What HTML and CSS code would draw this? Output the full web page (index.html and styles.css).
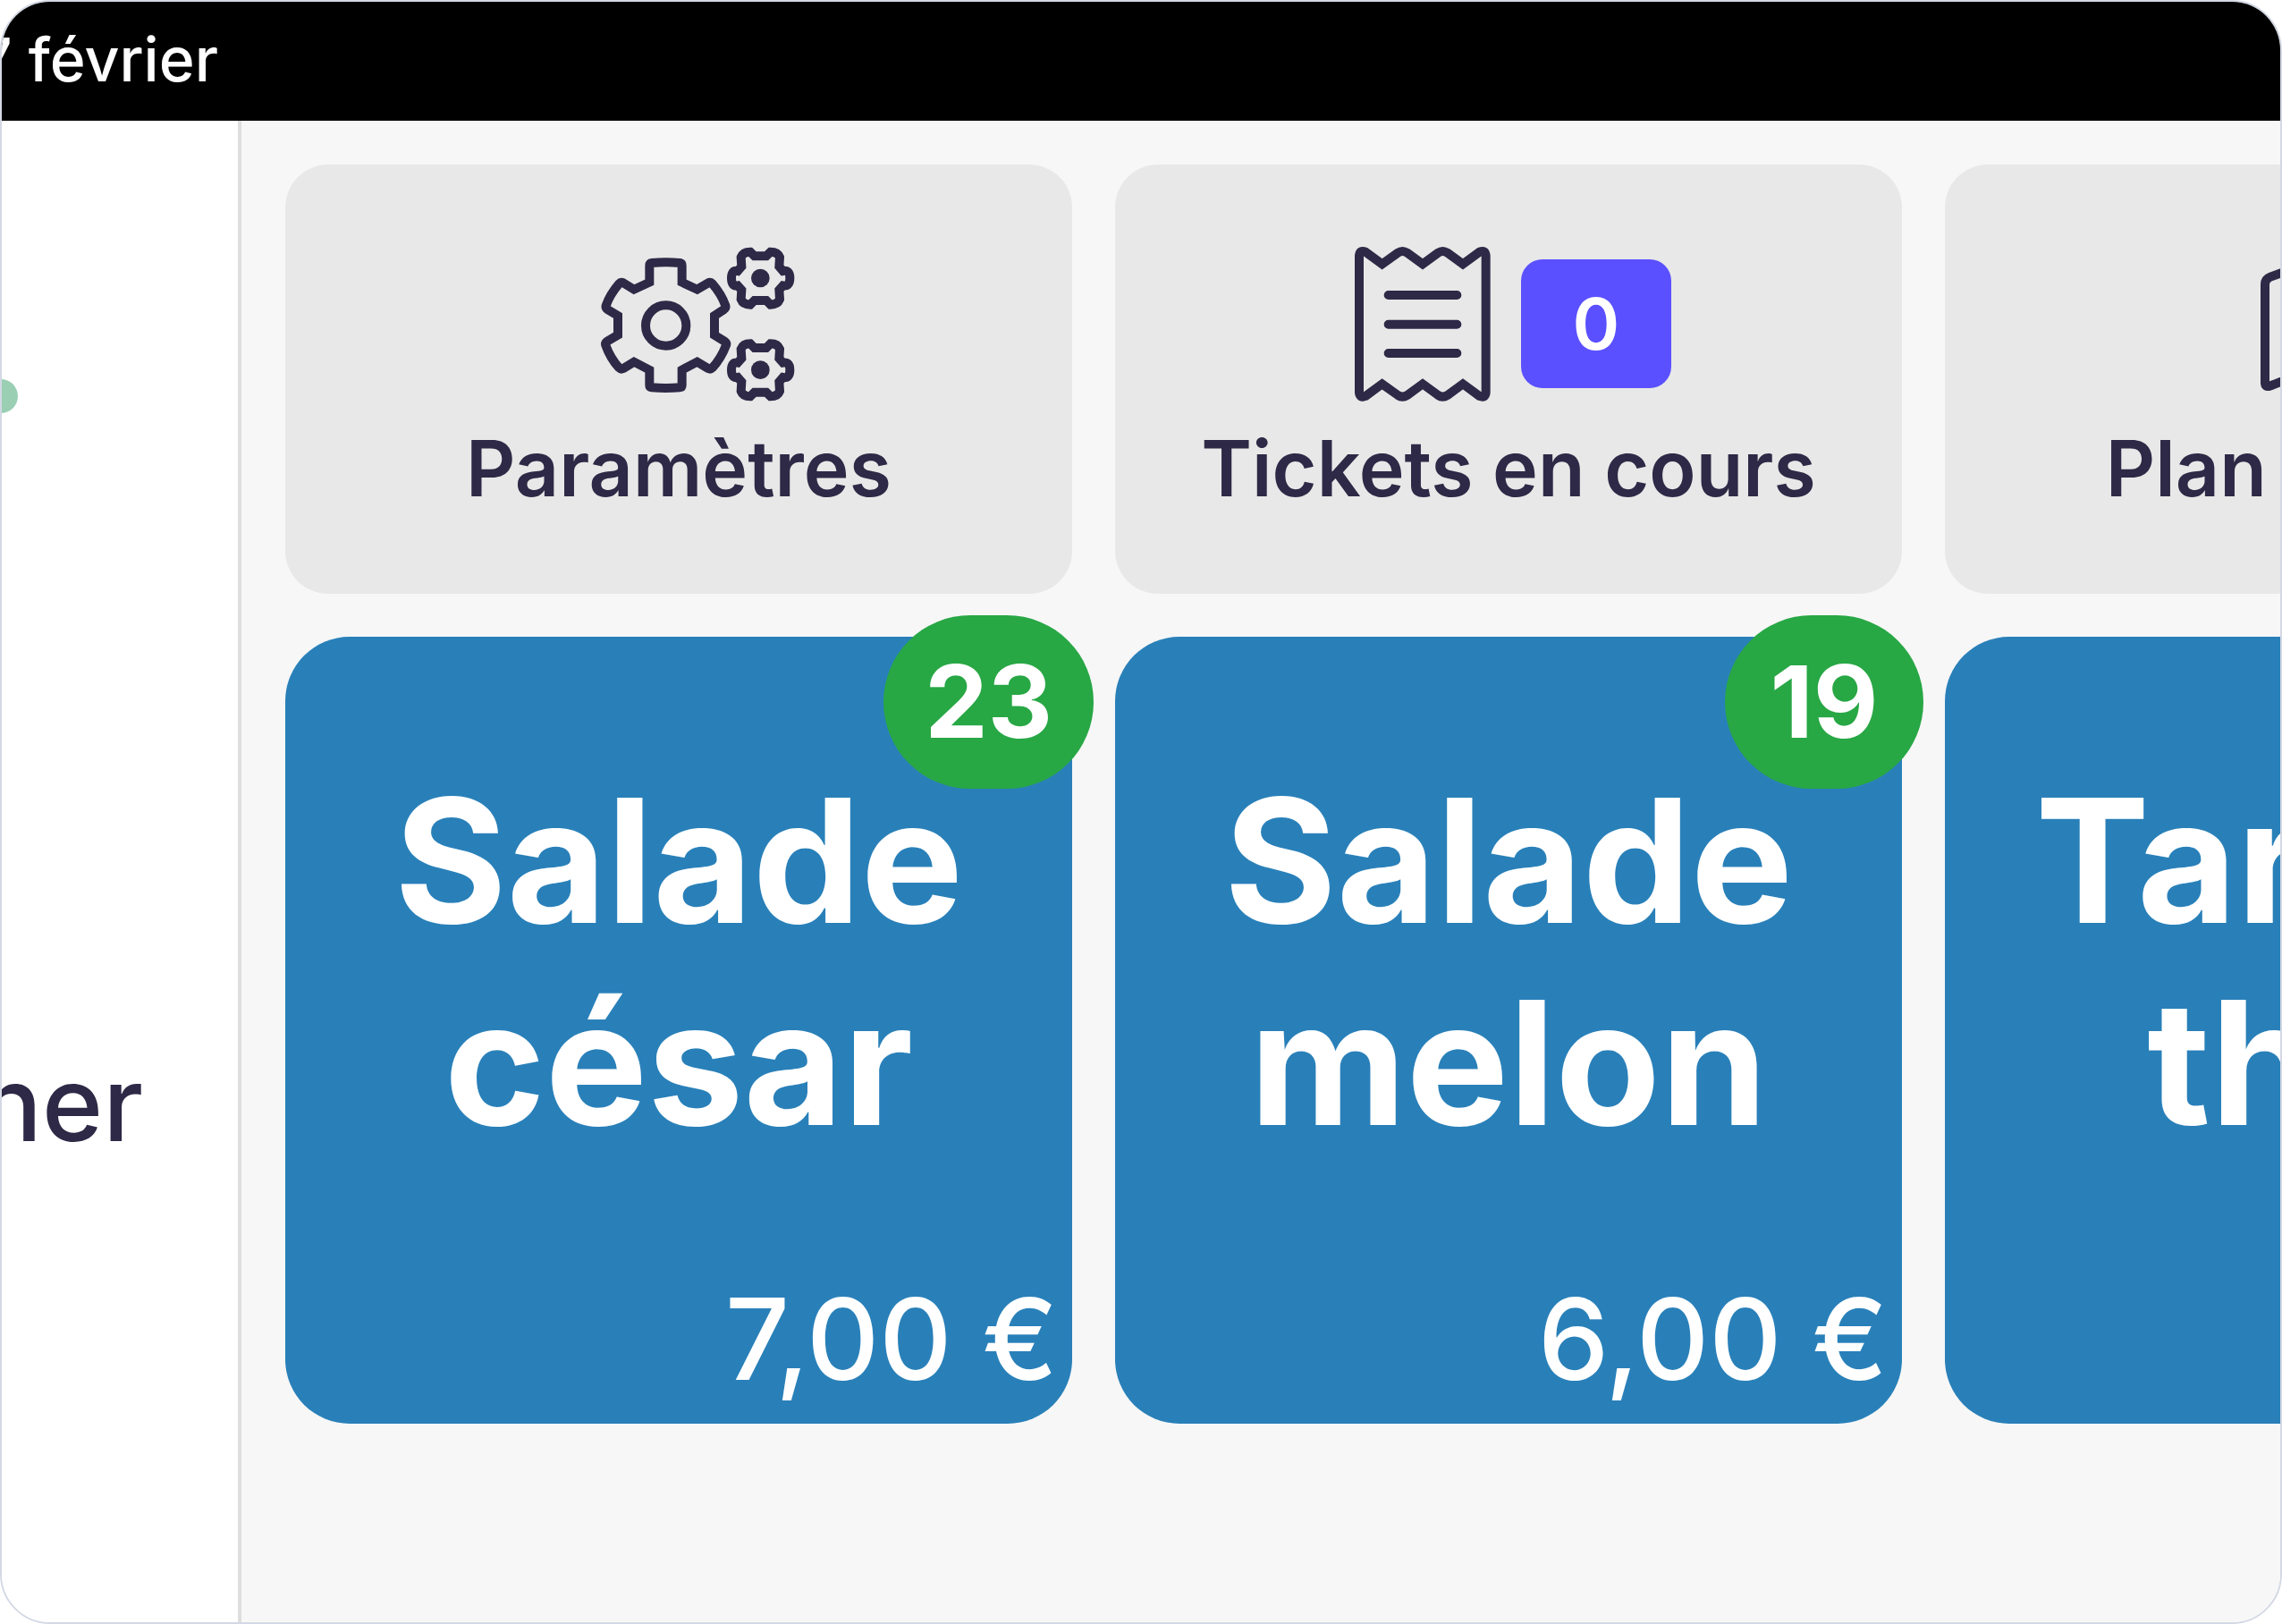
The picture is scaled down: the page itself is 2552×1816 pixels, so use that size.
FILE: index.html
```html
<!DOCTYPE html>
<html lang="fr">
<head>
    <meta charset="UTF-8">
    <meta name="viewport" content="width=device-width, initial-scale=1.0">
    <title>Caisse</title>
    <link rel="stylesheet" href="styles.css">
</head>
<body>
    <div class="screen">
        <header class="topbar">
            <span class="date">7 février</span>
        </header>

        <div class="content">
            <aside class="sidebar">
                <span class="status-dot"></span>
                <span class="sidebar-label">ner</span>
            </aside>

            <main class="grid">
                <button type="button" class="action">
                    <span class="action-icons">
                        <svg class="icon icon-wide" viewBox="96 75 660 528" aria-hidden="true">
                            <defs>
                                <g id="small-gear">
                                    <path d="M614 112H654L668 98Q692 98 699 116L697 147L710 162Q733 158 733 186Q733 215 710 211L697 226L699 257Q692 275 668 275L654 261H614L600 275Q576 275 569 257L571 226L558 211Q537 215 537 186Q537 158 558 162L571 147L569 116Q576 98 600 98Z"/>
                                    <circle class="fill" cx="634" cy="186" r="31"/>
                                </g>
                            </defs>
                            <path d="M262 144Q262 136 270 135Q317 130 363 135Q371 136 371 144V200L422 224L459 202Q467 198 473 205Q503 240 517 278Q519 286 512 291L480 312V377L514 398Q522 404 519 411Q503 454 473 487Q467 493 459 489L422 467L371 494V545Q371 552 363 553Q317 557 270 553Q262 552 262 545V494L210 467L174 489Q166 493 160 487Q130 454 115 411Q112 404 120 398L156 377V312L121 291Q114 286 116 278Q130 240 160 205Q166 198 174 202L210 224L262 200Z"/>
                            <circle cx="317" cy="345" r="68"/>
                            <use href="#small-gear"/>
                            <use href="#small-gear" y="308"/>
                        </svg>
                    </span>
                    <span class="action-label">Paramètres</span>
                </button>

                <button type="button" class="action">
                    <span class="action-icons">
                        <svg class="icon" viewBox="75 75 528 528" aria-hidden="true">
                            <path d="M120 110Q122 90 141 98L197 139L250 101Q265 91 281 101L333 139L385 101Q400 91 416 101L468 139L524 98Q543 90 545 110V570Q543 590 524 582L468 541L416 579Q400 589 385 579L333 541L281 579Q265 589 250 579L197 541L141 582Q122 590 120 570Z"/>
                            <path d="M218 243H448M218 341H448M218 438H448"/>
                        </svg>
                        <span class="counter">0</span>
                    </span>
                    <span class="action-label">Tickets en cours</span>
                </button>

                <button type="button" class="action">
                    <span class="action-icons">
                        <svg class="icon icon-wide" viewBox="0 0 660 528" aria-hidden="true">
                            <path d="M18 132Q18 114 36 107L220 40L440 110L642 40V395L440 470L220 400L34 473Q18 478 18 462ZM220 40V400M440 110V470"/>
                        </svg>
                    </span>
                    <span class="action-label">Plan de salle</span>
                </button>

                <button type="button" class="product">
                    <span class="stock">23</span>
                    <span class="product-name">Salade césar</span>
                    <span class="price">7,00 €</span>
                </button>

                <button type="button" class="product">
                    <span class="stock">19</span>
                    <span class="product-name">Salade melon</span>
                    <span class="price">6,00 €</span>
                </button>

                <button type="button" class="product">
                    <span class="product-name">Tartare thon</span>
                    <span class="price">9,00 €</span>
                </button>
            </main>
        </div>
    </div>
</body>
</html>
```
FILE: styles.css
```css
* {
    box-sizing: border-box;
}

body {
    margin: 0;
    background: #fff;
    color: #2e2946;
    font-family: Inter, "Liberation Sans", sans-serif;
}

button {
    border: none;
    margin: 0;
    color: inherit;
    font-family: inherit;
    cursor: pointer;
}

.screen {
    display: flex;
    flex-direction: column;
    min-height: 100vh;
    border: 2px solid #d3d8e4;
    border-radius: 56px;
    overflow: hidden;
}

/* Top bar */
.topbar {
    display: flex;
    padding: 24px 0 28px;
    background: #000;
    color: #fff;
}

.date {
    display: flex;
    justify-content: flex-end;
    width: 242px;
    font-size: 68px;
    font-weight: 500;
    line-height: 81px;
    white-space: nowrap;
}

.content {
    display: flex;
    flex: 1;
}

/* Left column */
.sidebar {
    flex: none;
    display: flex;
    flex-direction: column;
    align-items: flex-end;
    width: 268px;
    padding: 289px 106px 0 0;
    background: #fff;
    border-right: 4px solid #dedede;
    overflow: hidden;
}

.status-dot {
    align-self: flex-start;
    width: 38px;
    height: 38px;
    margin-left: -20px;
    border-radius: 50%;
    background: #9acfb4;
}

.sidebar-label {
    margin-top: 702px;
    font-size: 116px;
    font-weight: 500;
    line-height: 140px;
}

/* Tiles */
.grid {
    flex: 1;
    display: grid;
    grid-template-columns: repeat(3, 880px);
    align-content: start;
    gap: 48px;
    min-width: 0;
    padding: 49px;
    background: #f7f7f7;
    overflow: hidden;
}

.action {
    display: flex;
    flex-direction: column;
    align-items: center;
    justify-content: center;
    gap: 24px;
    height: 480px;
    padding: 0 24px;
    border-radius: 48px;
    background: #e8e8e8;
}

.action-icons {
    display: flex;
    align-items: center;
    gap: 20px;
}

.icon {
    width: 176px;
    height: 176px;
    fill: none;
    stroke: #2e2946;
    stroke-width: 30;
    stroke-linecap: round;
}

.icon .fill {
    fill: #2e2946;
    stroke: none;
}

.icon-wide {
    width: 220px;
    margin-left: 44px;
}

.counter {
    width: 168px;
    padding: 22px 0;
    border-radius: 24px;
    background: #5b50ff;
    color: #fff;
    font-size: 80px;
    font-weight: 600;
    line-height: 100px;
    text-align: center;
}

.action-label {
    font-size: 86px;
    font-weight: 600;
    line-height: 100px;
}

.product {
    position: relative;
    display: flex;
    flex-direction: column;
    height: 880px;
    padding: 16px 16px 20px;
    border-radius: 72px;
    background: #2980b9;
    color: #fff;
}

.product-name {
    flex: 1;
    display: flex;
    align-items: center;
    justify-content: center;
    padding: 0 80px;
    font-size: 192px;
    font-weight: 700;
    line-height: 226px;
}

.price {
    font-size: 126px;
    font-weight: 500;
    line-height: 150px;
    text-align: right;
}

.stock {
    position: absolute;
    top: -24px;
    right: -24px;
    min-width: 222px;
    padding: 28px 46px 30px;
    border-radius: 97px;
    background: #28a745;
    font-size: 112px;
    font-weight: 700;
    line-height: 136px;
}
```
